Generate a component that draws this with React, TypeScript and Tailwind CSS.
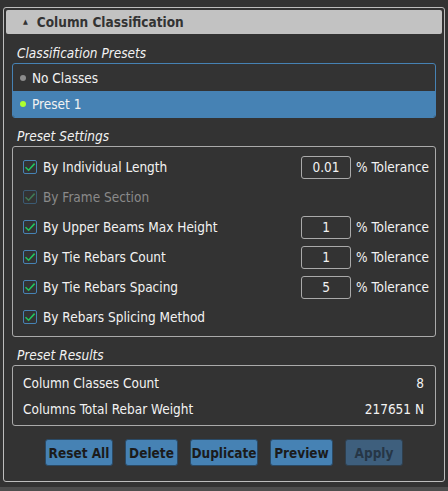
import React from "react";

const font = { fontFamily: '"DejaVu Sans Condensed", "DejaVu Sans", sans-serif' };

function Check({ disabled }: { disabled?: boolean }) {
  return (
    <span
      className={`flex h-[14px] w-[14px] items-center justify-center rounded-[2px] border ${
        disabled ? "border-[#3b5a73]" : "border-[#4682b4]"
      }`}
    >
      <svg width="12" height="12" viewBox="0 0 12 12" fill="none">
        <path
          d="M1.5 6.2 L4.6 9.2 L10.6 2.6"
          stroke={disabled ? "#3f7a55" : "#22c55e"}
          strokeWidth="1.6"
        />
      </svg>
    </span>
  );
}

type Setting = { label: string; value?: string; disabled?: boolean };

const settings: Setting[] = [
  { label: "By Individual Length", value: "0.01" },
  { label: "By Frame Section", disabled: true },
  { label: "By Upper Beams Max Height", value: "1" },
  { label: "By Tie Rebars Count", value: "1" },
  { label: "By Tie Rebars Spacing", value: "5" },
  { label: "By Rebars Splicing Method" },
];

const buttons = [
  { label: "Reset All", w: "w-[68px]" },
  { label: "Delete", w: "w-[53px]" },
  { label: "Duplicate", w: "w-[68px]" },
  { label: "Preview", w: "w-[63px]" },
];

export default function App() {
  return (
    <div className="h-[491px] w-[448px] bg-[#333333] text-[13.5px] leading-[18px] text-[#f2f2f2]" style={font}>
      <div className="flex h-[487px] flex-col px-[3px] pt-[7px]">
        <div className="flex h-[475px] flex-col rounded-[3px] border border-[#bdbdbd] p-[2px]">
          {/* Header */}
          <div className="flex h-[24px] shrink-0 items-center gap-[9px] rounded-[2px] bg-[#c2c2c2] pl-[17px] text-[13.5px] font-bold text-[#333333]">
            <span className="text-[7px]">▲</span>
            <span>Column Classification</span>
          </div>

          <div className="flex flex-col px-[6px]">
            {/* Presets */}
            <div className="mt-[10px] h-[18px] pl-[5px] italic">Classification Presets</div>
            <div className="mt-[1px] overflow-hidden rounded-[3px] border border-[#4682b4]">
              <div className="flex h-[27px] items-center gap-[6px] pl-[7px]">
                <span className="h-[6px] w-[6px] rounded-full bg-[#8c8c8c]" />
                <span>No Classes</span>
              </div>
              <div className="flex h-[26px] items-center gap-[6px] bg-[#4682b4] pl-[7px]">
                <span className="h-[6px] w-[6px] rounded-full bg-[#adff2f]" />
                <span>Preset 1</span>
              </div>
            </div>

            {/* Settings */}
            <div className="mt-[9px] h-[18px] pl-[5px] italic">Preset Settings</div>
            <div className="mt-[1px] flex flex-col rounded-[3px] border border-[#aaaaaa] pb-[4px] pl-[10px] pr-[4px] pt-[5px]">
              {settings.map((s) => (
                <div key={s.label} className="flex h-[30px] items-center">
                  <Check disabled={s.disabled} />
                  <span className={`ml-[6px] flex-1 ${s.disabled ? "text-[#8a8a8a]" : ""}`}>{s.label}</span>
                  {s.value && (
                    <>
                      <span className="flex h-[23px] w-[50px] items-center justify-center rounded-[3px] border border-[#aaaaaa]">
                        {s.value}
                      </span>
                      <span className="ml-[5px] w-[75px]">% Tolerance</span>
                    </>
                  )}
                </div>
              ))}
            </div>

            {/* Results */}
            <div className="mt-[9px] h-[18px] pl-[5px] italic">Preset Results</div>
            <div className="mt-[1px] flex flex-col rounded-[3px] border border-[#aaaaaa] pb-[3px] pl-[10px] pr-[11px] pt-[4px]">
              <div className="flex h-[26px] items-center justify-between">
                <span>Column Classes Count</span>
                <span>8</span>
              </div>
              <div className="flex h-[26px] items-center justify-between">
                <span>Columns Total Rebar Weight</span>
                <span>217651 N</span>
              </div>
            </div>

            {/* Actions */}
            <div className="mt-[13px] flex justify-center gap-[12px] font-bold text-[#1b1b1b]">
              {buttons.map((b) => (
                <button
                  key={b.label}
                  className={`h-[27px] ${b.w} rounded-[3px] border border-[#2a4a66] bg-[#4682b4]`}
                >
                  {b.label}
                </button>
              ))}
              <button className="h-[27px] w-[58px] rounded-[3px] border border-[#2f3f4d] bg-[#3e5f7d] text-[#263646]">
                Apply
              </button>
            </div>
          </div>
        </div>
      </div>
      <div className="h-[4px] bg-[#4d4d4d]" />
    </div>
  );
}
